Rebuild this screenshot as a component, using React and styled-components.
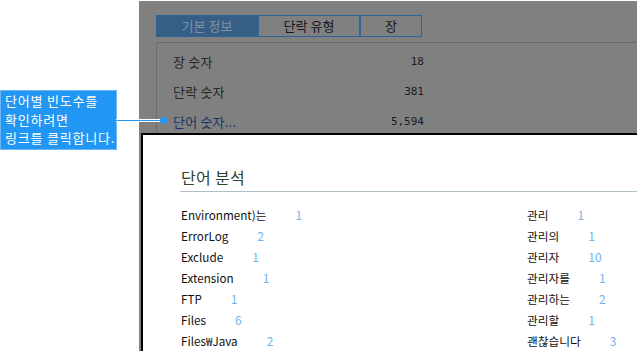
import React from "react";
import styled, { createGlobalStyle } from "styled-components";

const GlobalStyle = createGlobalStyle`
    html, body {
        margin: 0;
        padding: 0;
        background: #ffffff;
    }
    body {
        font-family: "Noto Sans CJK KR", "Noto Sans", sans-serif;
    }
`;

const infoRows = [
    { label: "장 숫자", value: "18" },
    { label: "단락 숫자", value: "381" },
    { label: "단어 숫자...", value: "5,594", link: true },
];

const tabs = [
    { title: "기본 정보", width: 102, active: true },
    { title: "단락 유형", width: 102 },
    { title: "장", width: 62 },
];

const wordColumns = [
    [
        ["Environment)는", 1],
        ["ErrorLog", 2],
        ["Exclude", 1],
        ["Extension", 1],
        ["FTP", 1],
        ["Files", 6],
        ["Files₩Java", 2],
    ],
    [
        ["관리", 1],
        ["관리의", 1],
        ["관리자", 10],
        ["관리자를", 1],
        ["관리하는", 2],
        ["관리할", 1],
        ["괜찮습니다", 3],
    ],
];

function App() {
    return (
        <>
            <GlobalStyle />
            <Page>
                <NoteColumn>
                    <Callout>
                        <div>단어별 빈도수를</div>
                        <div>확인하려면</div>
                        <div>링크를 클릭합니다.</div>
                        <Dot />
                    </Callout>
                </NoteColumn>

                <Screen>
                    <TabBar>
                        {tabs.map((t) => (
                            <Tab key={t.title} $active={t.active} $width={t.width}>
                                {t.title}
                            </Tab>
                        ))}
                    </TabBar>

                    <InfoBox>
                        {infoRows.map((row) => (
                            <InfoRow key={row.label}>
                                <InfoLabel $link={row.link}>{row.label}</InfoLabel>
                                <InfoValue>{row.value}</InfoValue>
                            </InfoRow>
                        ))}
                    </InfoBox>

                    <Dialog>
                        <DialogTitle>단어 분석</DialogTitle>
                        <WordColumns>
                            {wordColumns.map((col, i) => (
                                <WordColumn key={i}>
                                    {col.map(([word, count]) => (
                                        <WordRow key={word}>
                                            <Word>{word}</Word>
                                            <Count>{count}</Count>
                                        </WordRow>
                                    ))}
                                </WordColumn>
                            ))}
                        </WordColumns>
                    </Dialog>
                </Screen>
            </Page>
        </>
    );
}

export default App;

const Page = styled.div`
    display: flex;
    width: 638px;
    height: 351px;
    overflow: hidden;
`;

const NoteColumn = styled.div`
    flex: 0 0 139px;
    padding-top: 90px;
`;

const Callout = styled.div`
    position: relative;
    box-sizing: border-box;
    width: 117px;
    height: 60px;
    padding: 1px 2px 0 4px;
    border: 1px solid #6cb6f6;
    background: #2196f3;
    color: #ffffff;
    font-size: 13px;
    line-height: 18.5px;
    letter-spacing: 0.8px;
    white-space: nowrap;

    &::after {
        content: "";
        position: absolute;
        left: 100%;
        top: 29px;
        width: 46px;
        height: 1px;
        background: #2196f3;
        box-shadow: 0 1px 0 #ffffff, 0 -1px 0 #ffffff;
    }
`;

const Dot = styled.span`
    position: absolute;
    left: calc(100% + 44px);
    top: 26px;
    width: 7px;
    height: 7px;
    border-radius: 50%;
    background: #2196f3;
    z-index: 2;
`;

const Screen = styled.div`
    flex: 1;
    display: flex;
    flex-direction: column;
    margin: 1px 1px 0 0;
    background: #808080;
    overflow: hidden;
`;

const TabBar = styled.div`
    display: flex;
    margin: 14px 0 0 17px;
`;

const Tab = styled.div`
    box-sizing: border-box;
    width: ${({ $width }) => $width}px;
    height: 22px;
    border: 1px solid #2f6596;
    background: ${({ $active }) => ($active ? "#365f88" : "transparent")};
    color: ${({ $active }) => ($active ? "#8591a0" : "#151520")};
    font-size: 13px;
    line-height: 20px;
    text-align: center;
`;

const InfoBox = styled.div`
    box-sizing: border-box;
    height: 92px;
    margin: 5px 0 0 17px;
    padding: 3px 0 0 16px;
    border-top: 1px solid #666a6c;
    border-left: 1px solid #6c6c6c;
    overflow: hidden;
`;

const InfoRow = styled.div`
    display: flex;
    align-items: center;
    justify-content: space-between;
    width: 251px;
    height: 30px;
`;

const InfoLabel = styled.span`
    color: ${({ $link }) => ($link ? "#1c3461" : "#262626")};
    font-size: 13px;
    letter-spacing: 0.2px;
`;

const InfoValue = styled.span`
    color: #1a1a24;
    font-family: "DejaVu Sans Mono", "Liberation Mono", monospace;
    font-size: 11px;
`;

const Dialog = styled.div`
    flex: 1;
    margin-left: 2px;
    padding: 32px 0 0 37px;
    border-top: 2px solid #000000;
    border-left: 2px solid #000000;
    background: #ffffff;
`;

const DialogTitle = styled.div`
    padding: 0 0 4px 1px;
    border-bottom: 1px solid #aebfc6;
    color: #2f432c;
    font-size: 16px;
    line-height: 20px;
    letter-spacing: 0.3px;
`;

const WordColumns = styled.div`
    display: flex;
    margin-top: 12px;
`;

const WordColumn = styled.div`
    flex: 0 0 346px;
    display: flex;
    flex-direction: column;
`;

const WordRow = styled.div`
    display: flex;
    align-items: center;
    height: 21px;
    padding-left: 1px;
`;

const Word = styled.span`
    color: #111111;
    font-size: 11.7px;
`;

const Count = styled.span`
    margin-left: 29px;
    color: #74b2f0;
    font-size: 12px;
`;
